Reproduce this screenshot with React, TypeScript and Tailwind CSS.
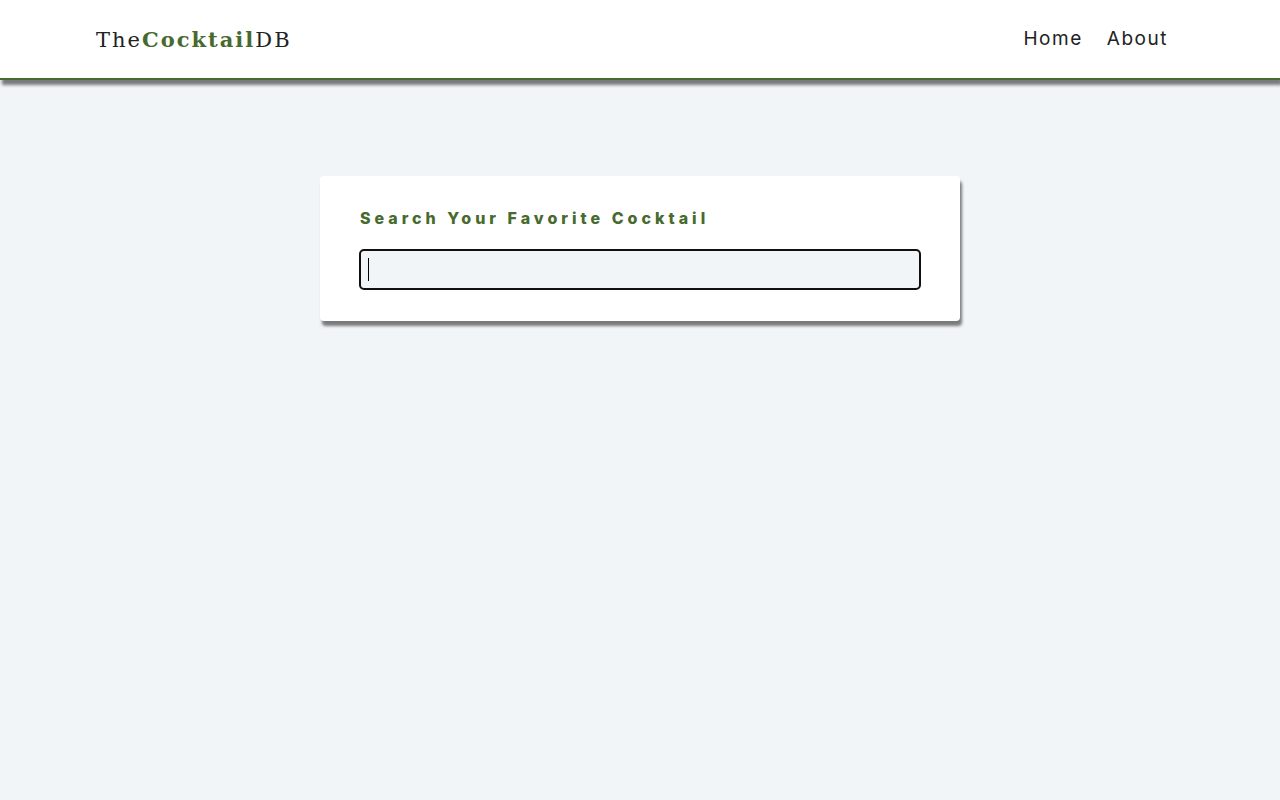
import { useState } from "react";

export default function App() {
  const [query, setQuery] = useState("");

  return (
    <div className="min-h-screen bg-[#f1f5f8] font-[Inter,sans-serif] text-[#222222]">
      <header className="relative border-b-2 border-[#476a2e] bg-white shadow-[2px_5px_3px_0px_rgba(0,0,0,0.5)]">
        <nav className="mx-auto flex h-[78px] w-[85%] items-center justify-between">
          <a
            href="/"
            className="pt-0.5 font-['DejaVu_Serif',serif] text-[21px] leading-8 tracking-[2px]"
          >
            The<strong className="font-bold text-[#476a2e]">Cocktail</strong>DB
          </a>
          <ul className="flex gap-6 pr-4 text-[19px] leading-7 tracking-[0.08em]">
            <li>
              <a href="/">Home</a>
            </li>
            <li>
              <a href="/about">About</a>
            </li>
          </ul>
        </nav>
      </header>
      <main className="px-6 py-24">
        <form
          onSubmit={(event) => event.preventDefault()}
          className="mx-auto max-w-[640px] rounded bg-white px-10 py-8 shadow-[2px_5px_3px_0px_rgba(0,0,0,0.5)]"
        >
          <label
            htmlFor="name"
            className="mb-[22px] block text-[16px] leading-5 font-extrabold tracking-[4px] text-[#476a2e]"
          >
            Search Your Favorite Cocktail
          </label>
          <div className="relative">
            <input
              id="name"
              type="text"
              autoFocus
              value={query}
              onChange={(event) => setQuery(event.target.value)}
              className="peer block h-[39px] w-full rounded bg-[#f1f5f8] px-2 text-[19px] -outline-offset-1 outline-[#101010] placeholder-shown:caret-transparent focus:outline-2"
              placeholder=" "
            />
            <span
              aria-hidden="true"
              className="pointer-events-none absolute top-2 left-2 hidden h-[23px] w-px bg-black peer-placeholder-shown:peer-focus:block"
            />
          </div>
        </form>
      </main>
    </div>
  );
}
